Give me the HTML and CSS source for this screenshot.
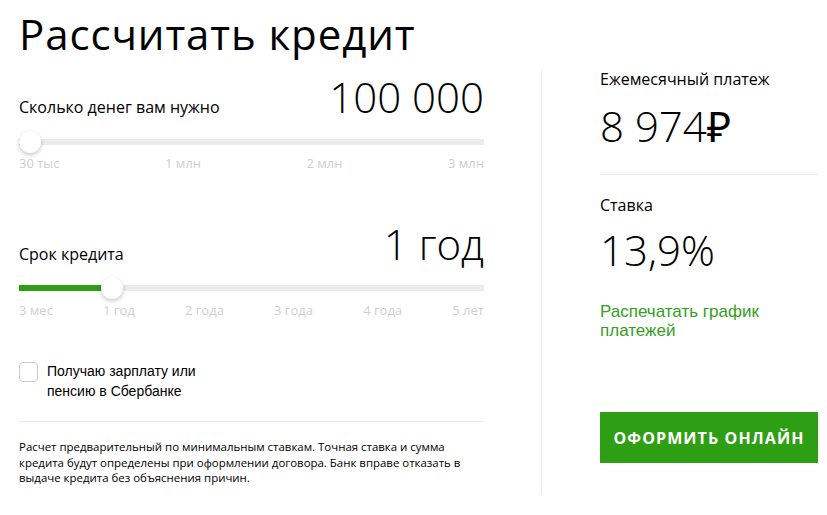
FILE: index.html
```html
<!DOCTYPE html>
<html lang="ru">
<head>
<meta charset="utf-8">
<title>Рассчитать кредит</title>
<link rel="stylesheet" href="styles.css">
</head>
<body>
<div class="page">
  <h1 class="title">Рассчитать кредит</h1>
  <div class="main">
    <div class="left">
      <div class="param param-first">
        <span class="param-label">Сколько денег вам нужно</span>
        <span class="param-value">100 000</span>
      </div>
      <div class="slider">
        <div class="track">
          <div class="fill" style="width: 4px"></div>
          <div class="thumb" style="left: 0px"></div>
        </div>
      </div>
      <div class="ticks">
        <span>30 тыс</span><span>1 млн</span><span>2 млн</span><span>3 млн</span>
      </div>

      <div class="param param-second">
        <span class="param-label">Срок кредита</span>
        <span class="param-value">1 год</span>
      </div>
      <div class="slider slider-second">
        <div class="track">
          <div class="fill" style="width: 93px"></div>
          <div class="thumb" style="left: 82px"></div>
        </div>
      </div>
      <div class="ticks ticks-second">
        <span>3 мес</span><span>1 год</span><span>2 года</span><span>3 года</span><span>4 года</span><span>5 лет</span>
      </div>

      <label class="check">
        <span class="box"></span>
        <span class="check-text">Получаю зарплату или<br>пенсию в Сбербанке</span>
      </label>

      <p class="note">Расчет предварительный по минимальным ставкам. Точная ставка и сумма<br>кредита будут определены при оформлении договора. Банк вправе отказать в<br>выдаче кредита без объяснения причин.</p>
    </div>

    <div class="right">
      <div class="res-label">Ежемесячный платеж</div>
      <div class="res-value">8 974<span class="rub">₽</span></div>
      <div class="res-sep"></div>
      <div class="res-label res-label-rate">Ставка</div>
      <div class="res-value res-value-rate">13,9%</div>
      <a class="print" href="#">Распечатать график<br>платежей</a>
      <button class="apply" type="button">Оформить онлайн</button>
    </div>
  </div>
</div>
</body>
</html>
```

FILE: styles.css
```css
* { box-sizing: border-box; }

html, body {
  margin: 0;
  padding: 0;
  background: #ffffff;
  color: #000000;
  font-family: "Open Sans", "Liberation Sans", sans-serif;
}

.page {
  padding-left: 19px;
  width: 827px;
  height: 515px;
  overflow: hidden;
}

.title {
  margin: 0;
  padding-top: 6px;
  font-size: 42px;
  font-weight: 500;
  line-height: 56px;
  letter-spacing: 0.9px;
  color: #000;
  height: 64px;
}

.main {
  display: flex;
  align-items: flex-start;
  margin-top: 6px;
}

.left {
  width: 523px;
  padding-right: 57px;
  border-right: 1px solid #ebebeb;
  padding-bottom: 8px;
}

.param {
  display: flex;
  justify-content: space-between;
  align-items: baseline;
  height: 48px;
}

.param-first { margin-top: 3px; }
.param-second { margin-top: 49px; }

.param-label {
  font-size: 16px;
  line-height: 20px;
  color: #000;
}

.param-value {
  font-size: 42px;
  font-weight: 300;
  line-height: 48px;
  color: #000;
}

.slider {
  margin-top: 10px;
  height: 22px;
  display: flex;
  align-items: center;
}

.slider-second { margin-top: 9px; }

.track {
  position: relative;
  width: 100%;
  height: 6px;
  background: #ebebeb;
}

.fill {
  height: 6px;
  background: #2d9e16;
}

.thumb {
  position: absolute;
  top: -8px;
  width: 22px;
  height: 22px;
  border-radius: 50%;
  background: #ffffff;
  box-shadow: 0 2px 4px rgba(0, 0, 0, 0.22);
}

.ticks {
  display: flex;
  justify-content: space-between;
  margin-top: 2px;
  font-size: 13px;
  line-height: 16px;
  color: #cfcfcf;
}

.ticks-second { margin-top: 3px; }

.check {
  display: flex;
  align-items: flex-start;
  gap: 9px;
  margin-top: 43px;
  padding-bottom: 20px;
  border-bottom: 1px solid #ebebeb;
}

.box {
  flex: none;
  width: 19px;
  height: 20px;
  margin-top: 1px;
  border: 1px solid #cccccc;
  border-radius: 4px;
  background: #fff;
}

.check-text {
  font-family: "Liberation Sans", Arial, sans-serif;
  font-size: 14px;
  line-height: 20px;
  color: #000;
}

.note {
  margin: 17px 0 0;
  font-size: 11.45px;
  line-height: 15.5px;
  color: #000;
}

.right {
  width: 276px;
  padding-left: 58px;
}

.res-label {
  font-size: 16px;
  line-height: 20px;
  margin-top: -1px;
}

.res-value {
  font-size: 42px;
  font-weight: 300;
  line-height: 48px;
  margin-top: 13px;
}

.rub {
  font-family: "Open Sans", "Noto Sans", sans-serif;
  font-weight: 400;
}

.res-sep {
  margin-top: 24px;
  border-top: 1px solid #ebebeb;
}

.res-label-rate { margin-top: 20px; }
.res-value-rate { margin-top: 11px; }

.print {
  display: block;
  margin-top: 28px;
  font-family: "Liberation Sans", Arial, sans-serif;
  font-size: 17px;
  line-height: 19px;
  color: #33a020;
  text-decoration: none;
}

.apply {
  display: block;
  margin-top: 72px;
  width: 218px;
  height: 51px;
  border: 0;
  border-radius: 0;
  background: #2e9e14;
  color: #ffffff;
  font-family: "Open Sans", "Liberation Sans", sans-serif;
  font-weight: 700;
  font-size: 16px;
  letter-spacing: 1.1px;
  text-transform: uppercase;
  padding: 0;
  cursor: pointer;
}
```
